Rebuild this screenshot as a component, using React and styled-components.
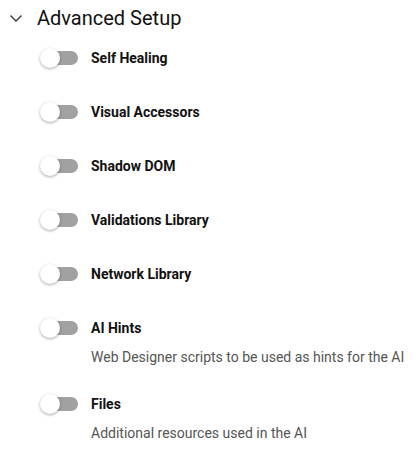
import styled, { createGlobalStyle } from "styled-components";

const GlobalStyle = createGlobalStyle`
  body {
    margin: 0;
    background: #ffffff;
    font-family: Roboto, "Liberation Sans", sans-serif;
  }
`;

const Panel = styled.section`
  padding: 3px 0 0 0;
`;

const Header = styled.div`
  display: flex;
  align-items: center;
  gap: 14px;
  height: 30px;
  padding-left: 9px;
`;

const Title = styled.h2`
  margin: 0;
  font-size: 20px;
  font-weight: 400;
  color: #111111;
`;

const List = styled.div`
  display: flex;
  flex-direction: column;
  padding: 14px 0 0 40px;
`;

const Item = styled.div`
  display: grid;
  grid-template-columns: 38px 1fr;
  column-gap: 13px;
  row-gap: 0;
  padding: 0 0 ${(p) => (p.$hasHint ? "26px" : "32px")} 0;
`;

const Track = styled.span`
  position: relative;
  display: block;
  width: 38px;
  height: 22px;
`;

const Rail = styled.span`
  position: absolute;
  left: 4px;
  top: 4px;
  width: 34px;
  height: 14px;
  border-radius: 7px;
  background: #a1a1a1;
`;

const Thumb = styled.span`
  position: absolute;
  left: 0;
  top: 1px;
  width: 20px;
  height: 20px;
  border-radius: 50%;
  background: #ffffff;
  box-shadow: 0 1px 3px rgba(0, 0, 0, 0.35);
`;

const Label = styled.span`
  font-size: 14px;
  font-weight: 700;
  color: #111111;
  line-height: 22px;
`;

const Hint = styled.span`
  grid-column: 2;
  font-size: 14px;
  color: #555555;
  line-height: 20px;
  margin-top: 8px;
`;

const Chevron = () => (
  <svg width="14" height="14" viewBox="0 0 14 14" fill="none">
    <path d="M1.5 4.5 L7 10 L12.5 4.5" stroke="#333" strokeWidth="1.3" />
  </svg>
);

const items = [
  { label: "Self Healing" },
  { label: "Visual Accessors" },
  { label: "Shadow DOM" },
  { label: "Validations Library" },
  { label: "Network Library" },
  { label: "AI Hints", hint: "Web Designer scripts to be used as hints for the AI" },
  { label: "Files", hint: "Additional resources used in the AI" },
];

const App = () => {
  return (
    <>
      <GlobalStyle />
      <Panel>
        <Header>
          <Chevron />
          <Title>Advanced Setup</Title>
        </Header>
        <List>
          {items.map((it) => (
            <Item key={it.label} $hasHint={!!it.hint}>
              <Track>
                <Rail />
                <Thumb />
              </Track>
              <Label>{it.label}</Label>
              {it.hint && <Hint>{it.hint}</Hint>}
            </Item>
          ))}
        </List>
      </Panel>
    </>
  );
};

export default App;
